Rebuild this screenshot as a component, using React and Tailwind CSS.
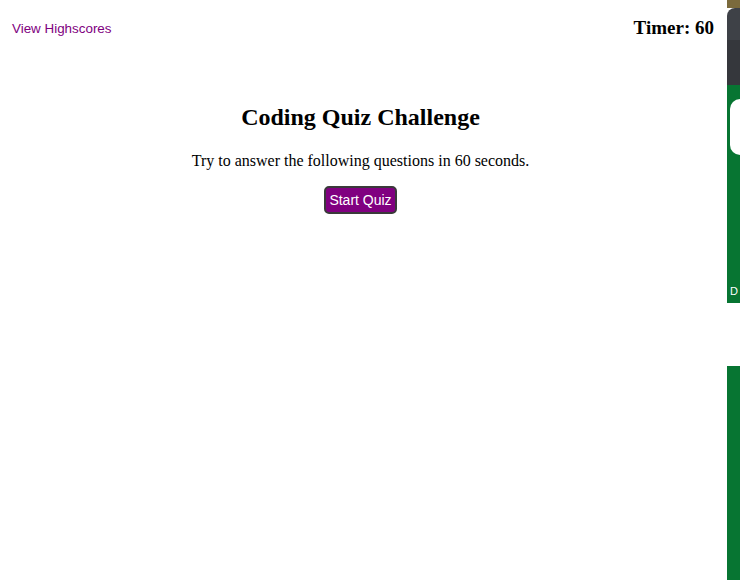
export default function App() {
  return (
    <div className="flex h-[580px] w-[740px] overflow-hidden bg-white">
      <div className="w-[721px] shrink-0">
        <header className="flex items-center justify-between pl-3 pr-[7px] pt-[16px]">
          <a
            href="#"
            className="mt-[2px] text-[13.4px] text-[#800080] font-['Liberation_Sans',Arial,sans-serif] leading-[22px]"
          >
            View Highscores
          </a>
          <span className="text-[19px] font-bold font-['Liberation_Serif','Times_New_Roman',serif] leading-[22px]">
            Timer: 60
          </span>
        </header>

        <main className="mt-[63px] flex flex-col items-center font-['Liberation_Serif','Times_New_Roman',serif]">
          <h1 className="text-[24px] font-bold leading-[28px]">Coding Quiz Challenge</h1>
          <p className="mt-[20px] text-[16px] leading-[20px]">
            Try to answer the following questions in 60 seconds.
          </p>
          <button
            type="button"
            className="mt-[15px] h-[28px] rounded-[5px] border-2 border-[#3a3a3a] bg-[#800080] px-[3px] text-[14px] text-white font-['Liberation_Sans',Arial,sans-serif]"
          >
            Start Quiz
          </button>
        </main>
      </div>

      {/* neighbouring window peeking in from the right */}
      <div className="ml-[6px] flex w-[13px] shrink-0 flex-col">
        <div className="h-[8px] bg-[#7b6a3c]" />
        <div className="h-[32px] rounded-tl-[8px] bg-[#3e4147]" />
        <div className="h-[45px] bg-[#35373c]" />
        <div className="flex h-[218px] flex-col bg-[#077532] pl-[3px]">
          <div className="mt-[14px] h-[56px] rounded-l-[12px] bg-white" />
          <span className="mt-auto mb-[6px] text-[11px] leading-[12px] text-white font-['Liberation_Sans',sans-serif]">
            D
          </span>
        </div>
        <div className="h-[63px] bg-white" />
        <div className="flex-1 bg-[#077532]" />
      </div>
    </div>
  );
}
